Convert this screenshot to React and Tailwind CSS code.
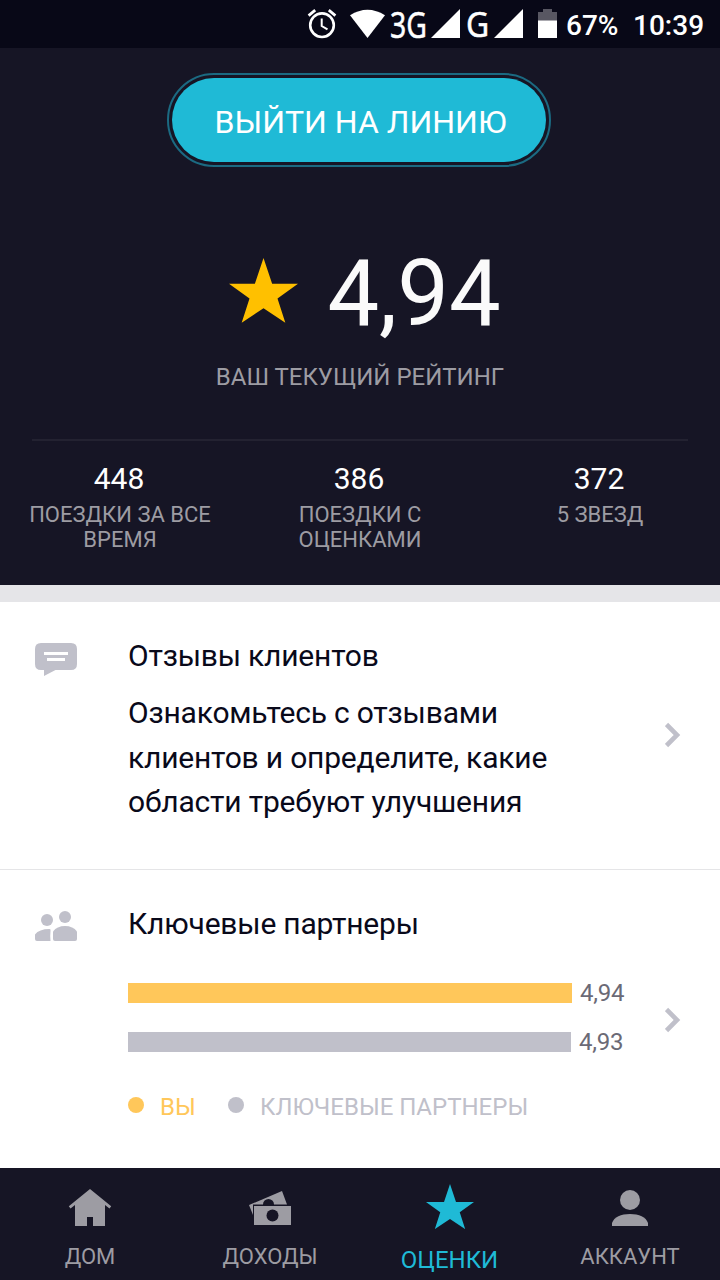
const stats = [
  { value: "448", lines: ["ПОЕЗДКИ ЗА ВСЕ", "ВРЕМЯ"] },
  { value: "386", lines: ["ПОЕЗДКИ С", "ОЦЕНКАМИ"] },
  { value: "372", lines: ["5 ЗВЕЗД"] },
];

const bars = [
  { value: "4,94", width: 444, color: "bg-[#ffc75a]" },
  { value: "4,93", width: 443, color: "bg-[#c0c0ca]" },
];

function Signal() {
  return (
    <svg width="29" height="29" viewBox="0 0 29 29" className="shrink-0">
      <path d="M0 29L29 0V29z" fill="#fff" />
    </svg>
  );
}

function StatusBar() {
  return (
    <div className="flex h-12 shrink-0 items-start bg-[#080817] pl-[307px] text-white">
      <svg width="30" height="30" viewBox="0 0 30 30" className="mt-[9px] shrink-0" fill="none" stroke="#fff">
        <circle cx="15" cy="16.2" r="11.8" strokeWidth="2.6" />
        <path d="M14.7 9.5V17l5.8 3.4" strokeWidth="2" />
        <path d="M1.6 6.6l6.6-5.4M28.4 6.6l-6.6-5.4" strokeWidth="2.8" />
      </svg>
      <svg width="35" height="29" viewBox="0 0 35 29" className="mt-[9px] ml-[13px] shrink-0">
        <path d="M0 6.2Q17.500-4.800 35 6.200L17.500 29z" fill="#fff" />
      </svg>
      <div className="ml-[5px] h-12 w-[41px] shrink-0">
        <span className="block w-max origin-left scale-x-[0.79] font-['Noto_Sans'] text-[36px] leading-[49px] [-webkit-text-stroke:0.5px_#fff]">
          3G
        </span>
      </div>
      <div className="mt-[9px] shrink-0">
        <Signal />
      </div>
      <div className="ml-[6px] h-12 w-[28px] shrink-0">
        <span className="block w-max origin-left scale-x-[0.91] font-['Noto_Sans'] text-[35px] leading-[48px] [-webkit-text-stroke:0.5px_#fff]">
          G
        </span>
      </div>
      <div className="mt-[9px] shrink-0">
        <Signal />
      </div>
      <svg width="19" height="29" viewBox="0 0 19 29" className="mt-[9px] ml-[15px] shrink-0">
        <path d="M0 3h5V0h9v3h5v9H0z" fill="#585762" />
        <path d="M0 11.500h19V29H0z" fill="#fff" />
      </svg>
      <span className="ml-[9px] w-[67px] shrink-0 text-[28px] leading-[51px] font-medium">67%</span>
      <span className="text-[28px] leading-[51px] font-medium whitespace-nowrap">10:39</span>
    </div>
  );
}

function Star({ size, className }) {
  return (
    <svg width={size} height={size * 0.94} viewBox="0 0 68 64" preserveAspectRatio="none" className={className}>
      <path d="M34 0L42.500 25.500H68L47.800 40L55.500 64L34 49.500L12.500 64L20.200 40L0 25.500H25.500z" fill="currentColor" />
    </svg>
  );
}

function Chevron() {
  return (
    <svg width="16" height="26" viewBox="0 0 16 26" fill="none" stroke="#c0c0ca" strokeWidth="4.600">
      <path d="M1.500 2.500L12 13L1.500 23.500" />
    </svg>
  );
}

function NavItem({ label, active, children }) {
  return (
    <div className={`flex flex-col items-center ${active ? "text-[#1fbad6]" : "text-[#9d9ca3]"}`}>
      <div className="flex h-[76px] w-full justify-center">{children}</div>
      {active ? (
        <span className="mr-px pt-[3px] text-[24px] leading-[26px]">{label}</span>
      ) : (
        <span className="text-[22px] leading-[25px]">{label}</span>
      )}
    </div>
  );
}

export default function App() {
  return (
    <div className="flex h-[1280px] w-[720px] flex-col overflow-hidden bg-white font-['Roboto',sans-serif]">
      <StatusBar />

      <header className="flex h-[537px] shrink-0 flex-col items-center bg-[#161525] pt-[25px]">
        <button className="ml-[-2px] h-[94px] w-[384px] rounded-full border-2 border-[#1b6a82] p-[3px]">
          <span className="flex h-[84px] items-center justify-center rounded-full bg-[#1fbad6] pt-[4px] pl-[3px] text-[32px] text-white">
            ВЫЙТИ НА ЛИНИЮ
          </span>
        </button>

        <div className="mt-[71px] ml-[10px] flex h-[110px] items-start gap-[29px] text-[#fafafa]">
          <Star size={69} className="mt-[20px] text-[#ffc000]" />
          <span className="pt-px text-[92px] leading-[110px]">4,94</span>
        </div>
        <p className="mt-[15px] text-[24px] leading-[28px] text-[#9d9ca3]">ВАШ ТЕКУЩИЙ РЕЙТИНГ</p>

        <div className="mt-[48px] h-0.5 w-[656px] shrink-0 bg-[#232231]" />

        <div className="mt-5 grid w-full grid-cols-3 text-center">
          {stats.map((stat) => (
            <div key={stat.value}>
              <p className="pr-[2px] text-[30px] leading-[36px] text-white">{stat.value}</p>
              <div className="mt-[5px] text-[22px] leading-[25px] text-[#9d9ca3]">
                {stat.lines.map((line) => (
                  <p key={line}>{line}</p>
                ))}
              </div>
            </div>
          ))}
        </div>
      </header>

      <div className="h-[17px] shrink-0 bg-[#e5e5e8]" />

      <section className="flex h-[268px] shrink-0 border-b border-[#e5e5e7] text-[#09091a]">
        <svg width="42" height="34" viewBox="0 0 42 34" className="mt-[41px] ml-[35px] shrink-0">
          <path d="M6 0H36Q42 0 42 6V21Q42 27 36 27H20.500L9 33V27H6Q0 27 0 21V6Q0 0 6 0z" fill="#c0c0ca" />
          <path d="M9 9H33V12H9zM12 15H30V18H12z" fill="#fff" />
        </svg>
        <div className="ml-[51px] w-[537px] shrink-0 pt-[36px] text-[30px] tracking-[-0.2px]">
          <h2 className="leading-[36px]">Отзывы клиентов</h2>
          <p className="mt-[17px] leading-[44.500px]">
            Ознакомьтесь с отзывами
            <br />
            клиентов и определите, какие
            <br />
            области требуют улучшения
          </p>
        </div>
        <div className="mt-[120px]">
          <Chevron />
        </div>
      </section>

      <section className="flex h-[298px] shrink-0 text-[#09091a]">
        <svg width="42" height="30" viewBox="0 0 42 30" className="mt-[41px] ml-[35px] shrink-0" fill="#c0c0ca">
          <circle cx="12" cy="9" r="6" />
          <circle cx="30" cy="6" r="6" />
          <path d="M14.500 18Q16 18 15.500 20Q15 24 15.500 30H2Q0 30 0 28V23.500Q4 18 14.500 18z" />
          <path d="M18 20.500Q22 15 30 15T42 20.500V28Q42 30 40 30H20Q18 30 18 28z" />
        </svg>
        <div className="ml-[51px] w-[537px] shrink-0 pt-[36px]">
          <h2 className="text-[30px] leading-[36px] tracking-[-0.2px]">Ключевые партнеры</h2>
          <div className="mt-[41px] flex flex-col gap-[29px]">
            {bars.map((bar) => (
              <div key={bar.value} className="flex h-5 items-center gap-2">
                <div className={`h-5 ${bar.color}`} style={{ width: bar.width }} />
                <span className="text-[24px] leading-5 tracking-[-0.2px] text-[#6b6a76]">{bar.value}</span>
              </div>
            ))}
          </div>
          <div className="mt-[37px] flex items-center text-[24px] leading-[28px]">
            <i className="mr-4 size-4 rounded-full bg-[#ffc75a]" />
            <span className="w-[68px] pt-[4px] text-[#ffc75a]">ВЫ</span>
            <i className="mr-4 size-4 rounded-full bg-[#c0c0ca]" />
            <span className="pt-[4px] text-[#c0c0ca]">КЛЮЧЕВЫЕ ПАРТНЕРЫ</span>
          </div>
        </div>
        <div className="mt-[137px]">
          <Chevron />
        </div>
      </section>

      <nav className="grid h-[112px] shrink-0 grid-cols-4 bg-[#161525]">
        <NavItem label="ДОМ">
          <svg width="44" height="38" viewBox="0 0 44 38" className="mt-[21px]" fill="currentColor">
            <path d="M22 0L43.200 17.200L41.500 19.500L37 16V37H25V28H19V37H7V16L2.500 19.500L0.800 17.200z" />
          </svg>
        </NavItem>
        <NavItem label="ДОХОДЫ">
          <svg width="44" height="36" viewBox="0 0 44 36" className="mt-[22px]">
            <path d="M1 15L34 1L39 14.500H26A5.500 5.500 0 0 0 15 14.500H5V25z" fill="currentColor" />
            <path d="M6 16H43V35H6z" fill="currentColor" />
            <circle cx="24.500" cy="25.500" r="6" fill="#161525" />
          </svg>
        </NavItem>
        <NavItem label="ОЦЕНКИ" active>
          <Star size={48} className="mt-[16px]" />
        </NavItem>
        <NavItem label="АККАУНТ">
          <svg width="36" height="36" viewBox="0 0 36 36" className="mt-[22px]" fill="currentColor">
            <circle cx="18" cy="10" r="10" />
            <path d="M0 36V33C2 27 9 24 18 24S34 27 36 33V36z" />
          </svg>
        </NavItem>
      </nav>
    </div>
  );
}
